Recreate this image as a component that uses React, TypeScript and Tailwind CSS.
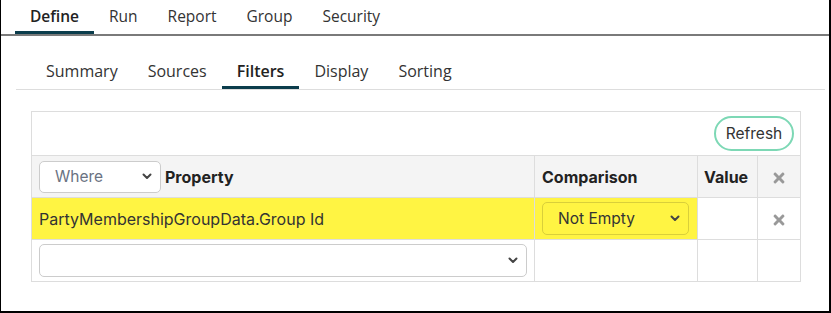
import { FaTimes } from 'react-icons/fa';

const tabFont = { fontFamily: '"Open Sans", "Liberation Sans", sans-serif' };
const tableFont = { fontFamily: 'Inter, "Liberation Sans", sans-serif' };

function Chevron() {
  return (
    <svg width="10" height="7" viewBox="0 0 10 7" className="shrink-0">
      <path d="M1.5 1.5 L5 5 L8.5 1.5" fill="none" stroke="#444" strokeWidth="2" strokeLinecap="round" strokeLinejoin="round" />
    </svg>
  );
}

function FakeSelect({ text, className, muted }: { text: string; className: string; muted?: boolean }) {
  return (
    <div className={`flex items-center justify-between rounded-[5px] border pl-[15px] pr-2 text-[15.5px] ${className}`}>
      <span className={muted ? 'text-gray-500' : 'text-[#333]'}>{text}</span>
      <Chevron />
    </div>
  );
}

export default function App() {
  const mainTabs = ['Define', 'Run', 'Report', 'Group', 'Security'];
  const subTabs = ['Summary', 'Sources', 'Filters', 'Display', 'Sorting'];

  return (
    <div className="h-[313px] w-[831px] border-b-2 border-l border-r-2 border-black bg-white" style={tabFont}>
      <div className="flex h-[36px] border-b-2 border-[#7a7a7a] pl-[14px]">
        {mainTabs.map((t) => (
          <div
            key={t}
            className={`flex h-[34px] items-center px-[15px] text-[15.5px] ${
              t === 'Define' ? 'border-b-[3px] border-[#0b3d4c] pt-[2px] font-semibold text-[#222]' : 'text-[#333]'
            }`}
          >
            {t}
          </div>
        ))}
      </div>

      <div className="ml-[15px] mr-[4px]">
        <div className="flex h-[54px] items-end border-b border-[#dddddd] pl-[15px]">
          {subTabs.map((t) => (
            <div
              key={t}
              className={`flex h-[33px] items-start px-[15px] pt-[3px] text-[16px] ${
                t === 'Filters' ? 'border-b-[3px] border-[#0b3d4c] font-semibold text-[#222]' : 'text-[#333]'
              }`}
            >
              {t}
            </div>
          ))}
        </div>

        <div className="ml-[15px] mt-[21px] w-[770px]" style={tableFont}>
          <table className="w-full border-collapse border border-[#dddddd] text-[16px] text-[#222]">
            <tbody>
              <tr className="h-[44px]">
                <td colSpan={4} className="border border-[#dddddd] pr-[6px] text-right">
                  <button className="h-[35px] w-[80px] rounded-full border-2 border-[#7dd8b5] bg-white text-[15.5px] text-[#333]">
                    Refresh
                  </button>
                </td>
              </tr>
              <tr className="h-[42px] bg-[#f4f4f4]">
                <td className="w-[503px] border border-[#dddddd] px-[7px]">
                  <div className="flex items-center gap-[4px]">
                    <FakeSelect text="Where" muted className="h-[32px] w-[122px] border-[#cccccc] bg-white" />
                    <span className="font-bold">Property</span>
                  </div>
                </td>
                <td className="w-[163px] border border-[#dddddd] px-[7px] font-bold">Comparison</td>
                <td className="w-[60px] border border-[#dddddd] px-[6px] font-bold">Value</td>
                <td className="border border-[#dddddd] text-center">
                  <FaTimes className="inline-block text-[16px] text-[#999]" />
                </td>
              </tr>
              <tr className="h-[42px]">
                <td className="border border-[#dddddd] bg-[#fff443] px-[7px] text-[#333]">PartyMembershipGroupData.Group Id</td>
                <td className="border border-[#dddddd] bg-[#fff443] px-[7px]">
                  <FakeSelect text="Not Empty" className="h-[33px] w-[147px] border-[#d9cf3a] bg-[#fff443]" />
                </td>
                <td className="border border-[#dddddd]"></td>
                <td className="border border-[#dddddd] text-center">
                  <FaTimes className="inline-block text-[16px] text-[#999]" />
                </td>
              </tr>
              <tr className="h-[42px]">
                <td className="border border-[#dddddd] px-[7px]">
                  <FakeSelect text="" className="h-[33px] w-[488px] border-[#cccccc] bg-white" />
                </td>
                <td className="border border-[#dddddd]"></td>
                <td className="border border-[#dddddd]"></td>
                <td className="border border-[#dddddd]"></td>
              </tr>
            </tbody>
          </table>
        </div>
      </div>
    </div>
  );
}
